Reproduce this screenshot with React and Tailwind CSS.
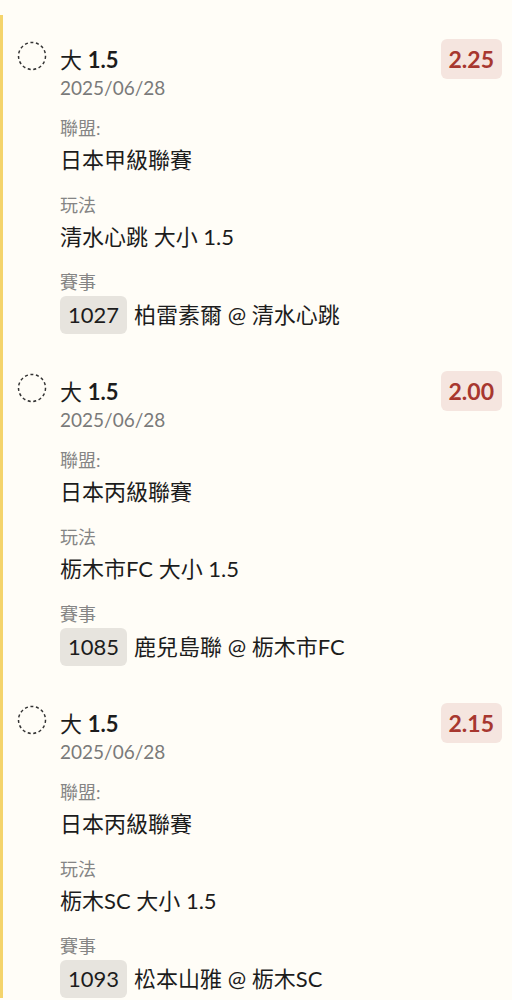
const bets = [
  {
    odds: '2.25',
    date: '2025/06/28',
    league: '日本甲級聯賽',
    play: '清水心跳 大小 1.5',
    matchNo: '1027',
    match: '柏雷素爾 @ 清水心跳',
  },
  {
    odds: '2.00',
    date: '2025/06/28',
    league: '日本丙級聯賽',
    play: '栃木市FC 大小 1.5',
    matchNo: '1085',
    match: '鹿兒島聯 @ 栃木市FC',
  },
  {
    odds: '2.15',
    date: '2025/06/28',
    league: '日本丙級聯賽',
    play: '栃木SC 大小 1.5',
    matchNo: '1093',
    match: '松本山雅 @ 栃木SC',
  },
];

function DashedCircle() {
  return (
    <svg width="30" height="30" viewBox="0 0 30 30" className="shrink-0 mt-[2px]">
      <circle cx="15" cy="15" r="13.5" fill="none" stroke="#333" strokeWidth="1.5" strokeDasharray="3 2.6" />
    </svg>
  );
}

function BetCard({ bet }) {
  return (
    <div className="flex items-start">
      <DashedCircle />
      <div className="ml-[13px] flex-1">
        <div className="mt-[7px] text-[22px] leading-[28px] text-[#1c1c1c]">
          大 <span className="font-bold">1.5</span>
        </div>
        <div className="text-[19px] leading-[28px] text-[#7a7a7a]">{bet.date}</div>

        <div className="mt-[13px] text-[18px] leading-[26px] text-[#858585]">聯盟:</div>
        <div className="mt-[4px] text-[22px] leading-[30px] text-[#1c1c1c]">{bet.league}</div>

        <div className="mt-[17px] text-[18px] leading-[26px] text-[#858585]">玩法</div>
        <div className="mt-[4px] text-[22px] leading-[30px] text-[#1c1c1c]">{bet.play}</div>

        <div className="mt-[17px] text-[18px] leading-[26px] text-[#858585]">賽事</div>
        <div className="mt-[1px] flex items-center gap-[7px] text-[22px] text-[#1c1c1c]">
          <span className="rounded-md bg-[#e7e4de] px-2 py-[6px] leading-[26px]">{bet.matchNo}</span>
          <span className="leading-[26px]">{bet.match}</span>
        </div>
      </div>
      <div className="rounded-md bg-[#f5e5df] px-2 py-[6px] text-[23px] font-bold leading-[28px] text-[#a7372f]">
        {bet.odds}
      </div>
    </div>
  );
}

export default function App() {
  return (
    <div
      className="min-h-screen bg-[#fffdf7] pt-[15px]"
      style={{ fontFamily: 'Lato, "Noto Sans CJK TC", sans-serif' }}
    >
      <div className="border-l-[3px] border-[#f4d46c] pl-[14px] pr-[10px] pt-[24px] flex flex-col gap-[37px]">
        {bets.map((bet) => (
          <BetCard key={bet.matchNo} bet={bet} />
        ))}
      </div>
    </div>
  );
}
